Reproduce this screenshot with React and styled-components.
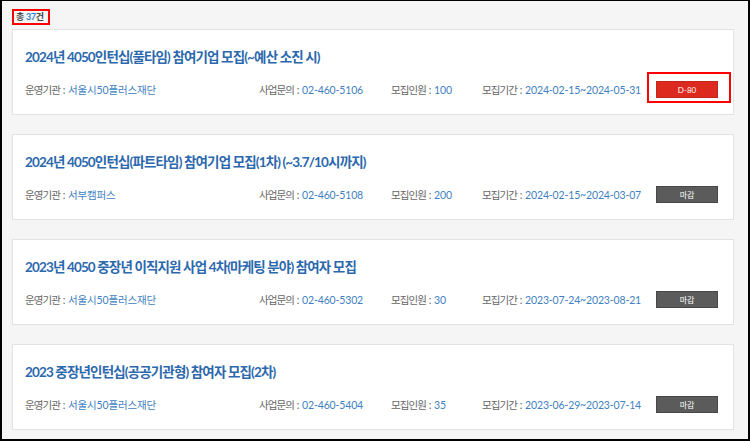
import styled, { createGlobalStyle } from "styled-components";

const programs = [
  {
    id: 1,
    title: "2024년 4050인턴십(풀타임) 참여기업 모집(~예산 소진 시)",
    org: "서울시50플러스재단",
    phone: "02-460-5106",
    people: 100,
    period: "2024-02-15~2024-05-31",
    status: "D-80",
    open: true,
  },
  {
    id: 2,
    title: "2024년 4050인턴십(파트타임) 참여기업 모집(1차) (~3.7/10시까지)",
    org: "서부캠퍼스",
    phone: "02-460-5108",
    people: 200,
    period: "2024-02-15~2024-03-07",
    status: "마감",
  },
  {
    id: 3,
    title: "2023년 4050 중장년 이직지원 사업 4차(마케팅 분야) 참여자 모집",
    org: "서울시50플러스재단",
    phone: "02-460-5302",
    people: 30,
    period: "2023-07-24~2023-08-21",
    status: "마감",
  },
  {
    id: 4,
    title: "2023 중장년인턴십(공공기관형) 참여자 모집(2차)",
    org: "서울시50플러스재단",
    phone: "02-460-5404",
    people: 35,
    period: "2023-06-29~2023-07-14",
    status: "마감",
  },
];

function App() {
  return (
    <>
      <GlobalStyle />
      <Frame>
        <Counter>
          총 <em>37</em>건
        </Counter>
        <List>
          {programs.map((item) => (
            <ProgramCard key={item.id} item={item} />
          ))}
        </List>
      </Frame>
    </>
  );
}

function ProgramCard({ item }) {
  return (
    <Card>
      <Title>{item.title}</Title>
      <MetaRow>
        <Meta>
          <Label>운영기관</Label> : <Value>{item.org}</Value>
        </Meta>
        <Meta>
          <Label>사업문의</Label> : <Value>{item.phone}</Value>
        </Meta>
        <Meta>
          <Label>모집인원</Label> : <Value>{item.people}</Value>
        </Meta>
        <Meta>
          <Label>모집기간</Label> : <Value>{item.period}</Value>
        </Meta>
        <BadgeSlot $marked={item.open}>
          <Badge $open={item.open}>{item.status}</Badge>
        </BadgeSlot>
      </MetaRow>
    </Card>
  );
}

export default App;

// --- Styled Components ---

const GlobalStyle = createGlobalStyle`
  body {
    margin: 0;
    font-family: "Lato", "Noto Sans CJK KR", sans-serif;
  }
`;

const Frame = styled.div`
  width: 750px;
  height: 441px;
  box-sizing: border-box;
  border: 2px solid #000;
  border-top-width: 1px;
  background-color: #f5f5f5;
  padding: 8px 14px 0 10px;
  overflow: hidden;
`;

const Counter = styled.div`
  display: flex;
  width: fit-content;
  align-items: center;
  height: 16px;
  box-sizing: border-box;
  border: 2px solid #f00;
  padding: 0 4px 0 2px;
  font-size: 9px;
  line-height: 12px;
  font-weight: 700;
  color: #444;
  letter-spacing: -0.3px;
  white-space: pre;

  em {
    font-style: normal;
    color: #2f7fd0;
  }
`;

const List = styled.div`
  display: flex;
  flex-direction: column;
  gap: 19px;
  margin-top: 4px;
`;

const Card = styled.div`
  height: 86px;
  box-sizing: border-box;
  background-color: #fff;
  border: 1px solid #e2e2e2;
  padding: 18px 15px 0 12px;
`;

const Title = styled.div`
  font-size: 13.5px;
  line-height: 18px;
  font-weight: 700;
  color: #2c68ad;
  letter-spacing: -0.85px;
  white-space: nowrap;
`;

const MetaRow = styled.div`
  display: grid;
  grid-template-columns: 234px 132px 91px 1fr auto;
  align-items: center;
  margin-top: 15px;
  height: 17px;
`;

const Meta = styled.span`
  font-size: 10.5px;
  color: #666;
  white-space: pre;
`;

const Label = styled.span`
  letter-spacing: -0.9px;
`;

const Value = styled.span`
  color: #3f7fc2;
  letter-spacing: -0.15px;
`;

const BadgeSlot = styled.div`
  position: relative;

  &::after {
    content: "";
    display: ${(p) => (p.$marked ? "block" : "none")};
    position: absolute;
    left: -9px;
    right: -13px;
    top: -9px;
    bottom: -5px;
    border: 2px solid #f00;
  }
`;

const Badge = styled.div`
  width: 62px;
  height: 17px;
  box-sizing: border-box;
  display: flex;
  align-items: center;
  justify-content: center;
  font-size: 8px;
  color: #fff;
  background-color: ${(p) => (p.$open ? "#dc2a1e" : "#5b5b5b")};
  border: 1px solid ${(p) => (p.$open ? "#c9241a" : "#474747")};
`;
